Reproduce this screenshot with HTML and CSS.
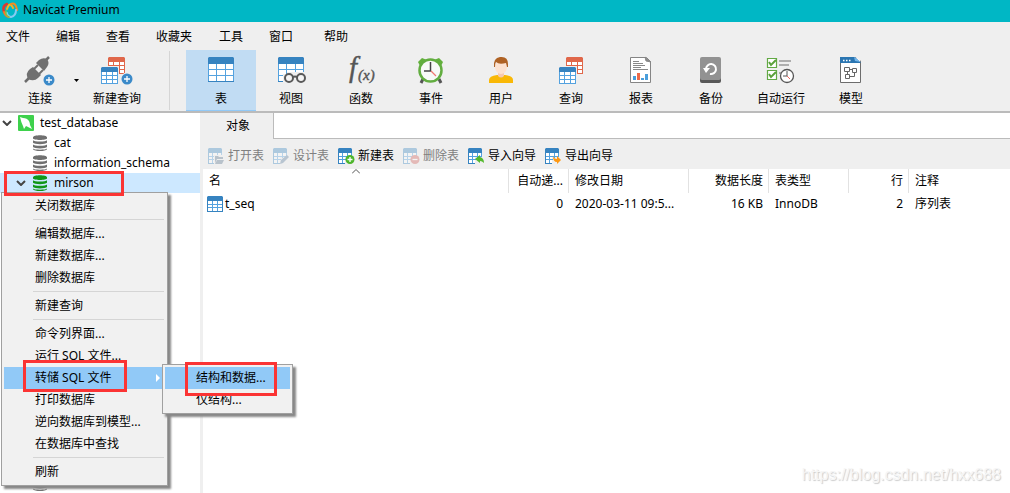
FILE: index.html
```html
<!DOCTYPE html>
<html lang="zh-CN">
<head>
<meta charset="utf-8">
<title>Navicat Premium</title>
<link rel="stylesheet" href="styles.css">
</head>
<body>
<svg class="sprite" aria-hidden="true">
  <symbol id="table" viewBox="0 0 26 26">
    <path fill="#fff" d="M0 1h26v24H0z"/>
    <path fill="#54a2df" d="M0 7h1v18H0zM25 7h1v18h-1zM8 7h1v18H8zM17 7h1v18h-1zM0 12h26v1H0zM0 18h26v1H0z"/>
    <path fill="#3683c0" d="M1 0h24l1 1v6H0V1zM0 24h26v1H0z"/>
  </symbol>
  <symbol id="small-table" viewBox="0 0 16 16">
    <path fill="#fff" d="M0 1h16v14H0z"/>
    <path fill="#3683c0" d="M1 0h14l1 1v4H0V1zM0 4h1v12H0zM15 4h1v12h-1zM0 15h16v1H0z"/>
    <path fill="#54a2df" d="M5 5h1v10H5zM10 5h1v10h-1zM1 8h14v1H1zM1 11h14v1H1z"/>
  </symbol>
  <symbol id="part-table" viewBox="0 0 16 16">
    <path fill="#fff" d="M0 1h14v8H7v6H0z"/>
    <path fill="#3683c0" d="M1 0h12l1 1v4H0V1zM0 4h1v12H0zM0 15h7v1H0z"/>
    <path fill="#54a2df" d="M4 5h1v10H4zM9 5h1v5H9zM13 5h1v4h-1zM1 8h13v1H1zM1 11h7v1H1z"/>
  </symbol>
  <symbol id="two-tables" viewBox="0 0 26 28">
    <path fill="#fff" d="M8 1h16v16H8z"/>
    <path fill="#e0674a" d="M8 0h15l1 1v4H7V1zM7 4h1v13H7zM23 4h1v13h-1zM12 5h1v12h-1zM18 5h1v12h-1zM8 8h16v1H8zM8 12h16v1H8zM8 16h16v1H8z"/>
    <path fill="#efefef" d="M0 9h18v18H0z"/>
    <path fill="#fff" d="M0 11h17v16H0z"/>
    <path fill="#3683c0" d="M1 10h15l1 1v4H0v-4z"/>
    <path fill="#54a2df" d="M0 15h1v12H0zM16 15h1v12h-1zM5 15h1v12H5zM11 15h1v12h-1zM1 18h15v1H1zM1 22h15v1H1zM0 26h17v1H0z"/>
  </symbol>
  <symbol id="plus" viewBox="0 0 12 12">
    <circle cx="6" cy="6" r="5.500" fill="#3b8ac9"/><path d="M3 6h6M6 3v6" stroke="#fff" stroke-width="1.300"/>
  </symbol>
  <symbol id="db" viewBox="0 0 14 16">
    <path d="M0 2.300C0-.6 14-.6 14 2.300v1.200C14 5.400 0 5.400 0 3.500zM0 5.200c1 1.800 13 1.800 14 0v2.600c-1 1.900-13 1.900-14 0zM0 9.400c1 1.800 13 1.800 14 0V12c-1 1.900-13 1.900-14 0zM0 13.500c1 1.600 13 1.600 14 0v.7c-1 2.400-13 2.400-14 0z"/>
  </symbol>
</svg>

<div class="app">
  <header class="titlebar">
    <svg class="logo" viewBox="0 0 18 18" fill="none" stroke-linecap="round">
      <path d="M6 3Q1 5 3 11" stroke="#d83b32" stroke-width="2.500"/>
      <path d="M3 11q1 4 5 5" stroke="#f57a26" stroke-width="2"/>
      <path d="M6 8Q8 2 10 4t2 3" stroke="#f9b21c" stroke-width="2"/>
      <path d="M10 3q5-2 6 6" stroke="#f08c22" stroke-width="2"/>
      <path d="M15 9q0 6-5 7-4-1-4-4" stroke="#86cbf2" stroke-width="2"/>
      <path d="M5 10q-1 4 3 6" stroke="#82c342" stroke-width="1.500"/>
    </svg>
    <span>Navicat Premium</span>
  </header>

  <nav class="menubar">
    <button>文件</button><button>编辑</button><button>查看</button><button>收藏夹</button><button>工具</button><button>窗口</button><button>帮助</button>
  </nav>

  <div class="toolbar">
    <button class="tool connect">
      <svg viewBox="0 0 32 28">
        <path d="M1 25l4-4M21 4l4-4" stroke="#6d6d6d" stroke-width="2.500"/>
        <path fill="#707070" d="M4 22q-3-6 2-10l3-2 8 8-3 3q-4 4-10 1z"/>
        <path d="M10 12l4-4M15 17l4-4" stroke="#707070" stroke-width="2"/>
        <path fill="#707070" d="M12 6l3-3q4-3 8-1 3 4 0 8l-3 4z"/>
        <use href="#plus" x="19" y="17" width="12" height="12"/>
      </svg>
      <span>连接</span>
    </button>
    <button class="drop" aria-label="连接选项"><svg viewBox="0 0 5 3"><path d="M0 0h5L2.500 3z"/></svg></button>
    <button class="tool query">
      <svg viewBox="0 0 32 28">
        <use href="#two-tables" width="26" height="28"/>
        <circle cx="26" cy="22" r="6.500" fill="#efefef"/><use href="#plus" x="20" y="16" width="12" height="12"/>
      </svg>
      <span>新建查询</span>
    </button>
    <div class="divider"></div>
    <button class="tool active"><svg viewBox="0 0 32 28"><use href="#table" x="3" width="26" height="26"/></svg><span>表</span></button>
    <button class="tool">
      <svg viewBox="0 0 32 28"><use href="#table" x="3" width="26" height="26"/><path fill="#efefef" d="M8 17h4V15h18v12H8z"/><g fill="#f5f5f5" stroke="#595959" stroke-width="2"><circle cx="14" cy="21" r="4"/><circle cx="26" cy="21" r="4"/><path d="M18 20q2-1 4 0" fill="none"/></g></svg>
      <span>视图</span>
    </button>
    <button class="tool">
      <svg viewBox="0 0 32 28" class="fx"><text x="4" y="20" font-size="29">f</text><text x="13" y="23" font-size="15">(x)</text></svg>
      <span>函数</span>
    </button>
    <button class="tool">
      <svg viewBox="0 0 32 28"><path d="M8 22l-2 4M24 22l2 4" stroke="#555" stroke-width="3"/><path fill="#62b03c" d="M3 5l4-4 5 2-7 6zM28 5l-4-4-5 2 7 6z"/><circle cx="15.500" cy="13.500" r="11" fill="#f8faf8" stroke="#62ad40" stroke-width="2.500"/><path d="M15.500 5v9H9" fill="none" stroke="#444" stroke-width="1.500"/><path d="M16 14l5 5" stroke="#f17872" stroke-width="1.200"/></svg>
      <span>事件</span>
    </button>
    <button class="tool">
      <svg viewBox="0 0 32 28"><path fill="#f9b806" d="M4 26v-3q0-4 8-5h8q8 1 8 5v3z"/><path fill="#f6c9b0" d="M13 14h6v5q-3 3-6 0z"/><ellipse cx="16" cy="10" rx="6" ry="7" fill="#fde2d0"/><path fill="#af6224" d="M9 10Q8 1 15 0q8-1 8 7v3h-1l-1-4q-7 2-10-1-1 1-1 5z"/></svg>
      <span>用户</span>
    </button>
    <button class="tool"><svg viewBox="0 0 32 28"><use href="#two-tables" x="4" width="26" height="28"/></svg><span>查询</span></button>
    <button class="tool">
      <svg viewBox="0 0 32 28"><path d="M5.500.5h16l4 4v21h-20z" fill="#fff" stroke="#858585"/><path d="M20 0l6 5-5-1z" fill="#888" stroke="#888"/><path d="M8 4.500h6M8 6.500h10M8 8.500h12M8 10.500h8M8 12.500h15" stroke="#888"/><path fill="#4a9edb" d="M8 19h3v4H8zM16 21h3v2h-3zM20 17h3v6h-3z"/><path fill="#ee6a49" d="M12 16h3v7h-3z"/></svg>
      <span>报表</span>
    </button>
    <button class="tool">
      <svg viewBox="0 0 32 28"><rect x="5" y="3" width="21" height="23" rx="2" fill="#585858"/><rect x="5" width="21" height="23" rx="2" fill="#929292"/><path d="M11 12a5 5 0 1 1 4 5" fill="none" stroke="#fff" stroke-width="2"/><path fill="#fff" d="M8 11h7l-4 5z"/></svg>
      <span>备份</span>
    </button>
    <button class="tool">
      <svg viewBox="0 0 32 28"><path fill="#fff" stroke="#62a944" stroke-width="1.200" d="M2.500 1.500h9v9h-9zM2.500 13.500h9v9h-9z"/><path d="M4 5l2 3 5-5M4 17l2 3 5-5" fill="none" stroke="#5ba23b" stroke-width="2"/><path d="M14 4h12M14 8h10M14 16h4" stroke="#999" stroke-width="1.500"/><circle cx="22" cy="19" r="6.500" fill="#fff" stroke="#555" stroke-width="1.300"/><path d="M22 14v5h-4" fill="none" stroke="#555"/><path d="M22 19l3 3" stroke="#ef6860"/></svg>
      <span>自动运行</span>
    </button>
    <button class="tool">
      <svg viewBox="0 0 32 28"><path fill="#fff" stroke="#6d6d6d" d="M5.500.5h20v25h-20z"/><path fill="#2b76b2" d="M5 0h15l6 6H5z"/><path fill="#74b6eb" d="M19 0l7 5-6-1z"/><path fill="#efefef" d="M20 0h6v4z"/><path stroke="#fff" stroke-width="1.500" d="M8 3.500h1.500M11 3.500h1.500M14 3.500h1.500"/><path fill="none" stroke="#666" d="M9.500 10.500h5v4h-5zM17.500 11.500h4v4h-4zM10.500 17.500h4v4h-4zM14 12.500h3M12.500 14v4M15 19.500h4.500v-4"/></svg>
      <span>模型</span>
    </button>
  </div>

  <div class="workspace">
    <aside class="tree">
      <div class="node root"><svg class="chevron" viewBox="0 0 10 6"><path d="M1 1l4 4 4-4"/></svg>
        <svg class="dolphin" viewBox="0 0 16 16"><rect width="16" height="16" rx="1" fill="#3ed14c"/><path fill="#fff" d="M2 2l3 1q4 0 6 3 1 2 1 4l2 4-4-2-2-1-2 3-1-3Q3 7 2 2z"/></svg><span>test_database</span></div>
      <div class="node"><svg class="db" viewBox="0 0 14 16"><use href="#db"/></svg><span>cat</span></div>
      <div class="node"><svg class="db" viewBox="0 0 14 16"><use href="#db"/></svg><span>information_schema</span></div>
      <div class="node open selected"><svg class="chevron" viewBox="0 0 10 6"><path d="M1 1l4 4 4-4"/></svg><svg class="db" viewBox="0 0 14 16"><use href="#db"/></svg><span>mirson</span></div>
      <div class="node last"><svg class="db" viewBox="0 0 14 16"><use href="#db"/></svg><span>test</span></div>
    </aside>

    <main class="content">
      <div class="tabs"><button class="tab">对象</button><div class="tab-space"></div></div>
      <div class="actions">
        <button disabled><svg viewBox="0 0 17 16"><use href="#part-table" width="16" height="16"/><path fill="#efefef" d="M6 7h10v9H6z"/><path fill="#54708a" d="M7 8h3l1 1h4v2H9l-2 4zM9 12h7l-2 4H7z"/></svg>打开表</button>
        <button disabled><svg viewBox="0 0 17 16"><use href="#part-table" width="16" height="16"/><path fill="#54789a" d="M7 16l1-4 6-5 2 2-6 6z"/></svg>设计表</button>
        <button><svg viewBox="0 0 17 16"><use href="#part-table" width="16" height="16"/><circle cx="12" cy="11.500" r="4.500" fill="#4db52b"/><path d="M9.500 11.500h5M12 9v5" stroke="#fff" stroke-width="1.300"/></svg>新建表</button>
        <button disabled><svg viewBox="0 0 17 16"><use href="#part-table" width="16" height="16"/><circle cx="12" cy="11.500" r="4.500" fill="#d05850"/><path d="M9.500 11.500h5" stroke="#fff" stroke-width="1.300"/></svg>删除表</button>
        <button><svg viewBox="0 0 17 16"><use href="#part-table" width="16" height="16"/><path fill="#54b92e" d="M7 11l5-4v2q4 1 4 6-2-2-4-2v2z"/></svg>导入向导</button>
        <button><svg viewBox="0 0 17 16"><use href="#part-table" width="16" height="16"/><path fill="#ff9811" d="M16 12l-4 4v-2q-4 0-4-6 1 3 4 3V8z"/></svg>导出向导</button>
      </div>
      <div class="list">
        <svg class="sort" viewBox="0 0 8 5"><path d="M0 4.500l4-4 4 4"/></svg>
        <table>
          <colgroup><col class="c-name"><col class="c-small"><col class="c-date"><col class="c-medium"><col class="c-medium"><col class="c-small"><col></colgroup>
          <thead><tr><th>名</th><th class="num">自动递...</th><th>修改日期</th><th class="num">数据长度</th><th>表类型</th><th class="num">行</th><th>注释</th></tr></thead>
          <tbody><tr><td><span class="table-name"><svg viewBox="0 0 16 16"><use href="#small-table"/></svg>t_seq</span></td><td class="num">0</td><td>2020-03-11 09:5...</td><td class="num">16 KB</td><td>InnoDB</td><td class="num">2</td><td>序列表</td></tr></tbody>
        </table>
        <div class="watermark">https://blog.csdn.net/hxx688</div>
      </div>
    </main>
  </div>

  <div class="popup context">
    <button>关闭数据库</button><hr>
    <button>编辑数据库...</button><button>新建数据库...</button><button>删除数据库</button><hr>
    <button>新建查询</button><hr>
    <button>命令列界面...</button><button>运行 SQL 文件...</button>
    <button class="current">转储 SQL 文件<svg viewBox="0 0 4 8"><path fill="#fff" d="M0 0l4 4-4 4z"/></svg></button>
    <button>打印数据库</button><button>逆向数据库到模型...</button><button>在数据库中查找</button><hr>
    <button>刷新</button>
  </div>
  <div class="popup submenu"><button class="current">结构和数据...</button><button>仅结构...</button></div>
  <div class="mark mark-db"></div>
  <div class="mark mark-dump"></div>
  <div class="mark mark-data"></div>
</div>
</body>
</html>
```

FILE: styles.css
```css
* { box-sizing: border-box; }
body {
  margin: 0;
  font: 12px/20px "Noto Sans", "Noto Sans CJK SC", sans-serif;
  color: #000;
  background: #efefef;
}
button {
  border: 0;
  padding: 0;
  background: none;
  color: inherit;
  font: inherit;
  white-space: nowrap;
}
svg { display: block; flex: none; }
.sprite { position: absolute; width: 0; height: 0; }
.app {
  position: relative;
  display: flex;
  flex-direction: column;
  min-height: 100vh;
  overflow: hidden;
}
.titlebar {
  display: flex;
  align-items: center;
  gap: 4px;
  height: 22px;
  padding: 0 0 2px 1px;
  background: #00b7c5;
}
.logo { width: 18px; height: 18px; }
.menubar {
  display: grid;
  grid-template-columns: 50px 50px 50px 63px 50px 55px auto;
  justify-content: start;
  height: 28px;
  padding: 4px 0 2px 6px;
}
.menubar button { text-align: left; }

.toolbar {
  display: flex;
  height: 63px;
  border-bottom: 2px solid #bbb;
}
.tool {
  display: flex;
  flex-direction: column;
  align-items: center;
  gap: 4px;
  width: 70px;
  padding-top: 7px;
  line-height: 20px;
}
.tool svg { width: 32px; height: 28px; overflow: visible; }
.connect { margin-left: 6px; width: 68px; }
.drop { width: 5px; }
.drop svg { width: 5px; height: 3px; }
.query { width: 76px; }
.divider { width: 1px; margin: 1px 16px 1px 14px; background: #d5d5d5; }
.active { background: #c1dcf3; border-bottom: 1px solid #91c9f7; }
.fx text {
  font-family: "Liberation Serif", serif;
  font-style: italic;
  fill: #555;
  stroke: #555;
  stroke-width: .4;
}

.workspace { display: flex; flex: 1; }
.tree {
  display: flex;
  flex-direction: column;
  width: 200px;
  background: #fff;
}
.node {
  display: flex;
  align-items: center;
  gap: 7px;
  height: 20px;
  padding-left: 33px;
}
.root { padding-left: 2px; gap: 6px; }
.open { padding-left: 16px; }
.selected { background: #cde8ff; }
.last { margin-top: auto; }
.chevron { width: 10px; height: 6px; fill: none; stroke: #444; stroke-width: 2; }
.dolphin { width: 16px; height: 16px; }
.db { width: 14px; height: 16px; fill: #707070; }
.selected .db { fill: #109618; }

.content { display: flex; flex: 1; flex-direction: column; min-width: 0; }
.tabs { display: flex; height: 26px; }
.tab { width: 73px; padding-left: 3px; }
.tab-space {
  flex: 1;
  background: #fff;
  border: solid #bbb;
  border-width: 0 0 1px 1px;
}
.actions {
  display: flex;
  gap: 8px;
  height: 30px;
  padding: 4px 0 0 8px;
}
.actions button { display: flex; align-items: center; gap: 3px; }
.actions svg { width: 17px; height: 16px; margin-right: 0; }
.actions button + button { padding-left: 1px; }
.actions button:disabled { color: #808080; }
.actions button:disabled svg { opacity: .35; }
.list {
  position: relative;
  flex: 1;
  margin-left: 3px;
  background: #fff;
}
.sort {
  position: absolute;
  top: 0;
  left: 149px;
  width: 8px;
  height: 5px;
  fill: none;
  stroke: #555;
}
table { width: 100%; border-collapse: separate; border-spacing: 0; table-layout: fixed; }
.c-name { width: 306px; }
.c-small { width: 60px; }
.c-date { width: 120px; }
.c-medium { width: 80px; }
th, td {
  padding: 0 6px;
  font-weight: normal;
  text-align: left;
  white-space: nowrap;
}
th { height: 24px; border-right: 1px solid #e2e2e2; }
th:last-child { border: 0; }
td { height: 22px; }
th.num { text-align: right; padding: 0 5px 0 0; }
td.num { text-align: right; }
td:first-child { padding-left: 4px; }
.table-name { display: flex; align-items: center; gap: 2px; }
.table-name svg { width: 16px; height: 16px; }
.watermark {
  position: absolute;
  right: 9px;
  bottom: 8px;
  font: 16px/20px "Liberation Sans", sans-serif;
  color: #f6f6f6;
  text-shadow: 1px 1px 1px #ccc;
}

.popup {
  position: absolute;
  display: flex;
  flex-direction: column;
  padding: 2px;
  background: #f1f1f1;
  border: 1px solid #a0a0a0;
  box-shadow: 3px 3px 2px #888;
}
.context { left: 1px; top: 192px; width: 167px; }
.submenu { left: 162px; top: 364px; width: 131px; }
.popup button {
  display: flex;
  align-items: center;
  justify-content: space-between;
  height: 22px;
  padding: 0 5px 0 31px;
  text-align: left;
}
.popup .current { background: #91c9f7; }
.popup button svg { width: 4px; height: 8px; }
.popup hr {
  width: calc(100% - 30px);
  height: 1px;
  margin: 2px 0 3px 29px;
  border: 0;
  background: #d5d5d5;
}
.mark { position: absolute; border: 3px solid #fb3434; }
.mark-db { left: 4px; top: 171px; width: 120px; height: 25px; }
.mark-dump { left: 23px; top: 360px; width: 104px; height: 32px; }
.mark-data { left: 185px; top: 362px; width: 92px; height: 34px; }
```
